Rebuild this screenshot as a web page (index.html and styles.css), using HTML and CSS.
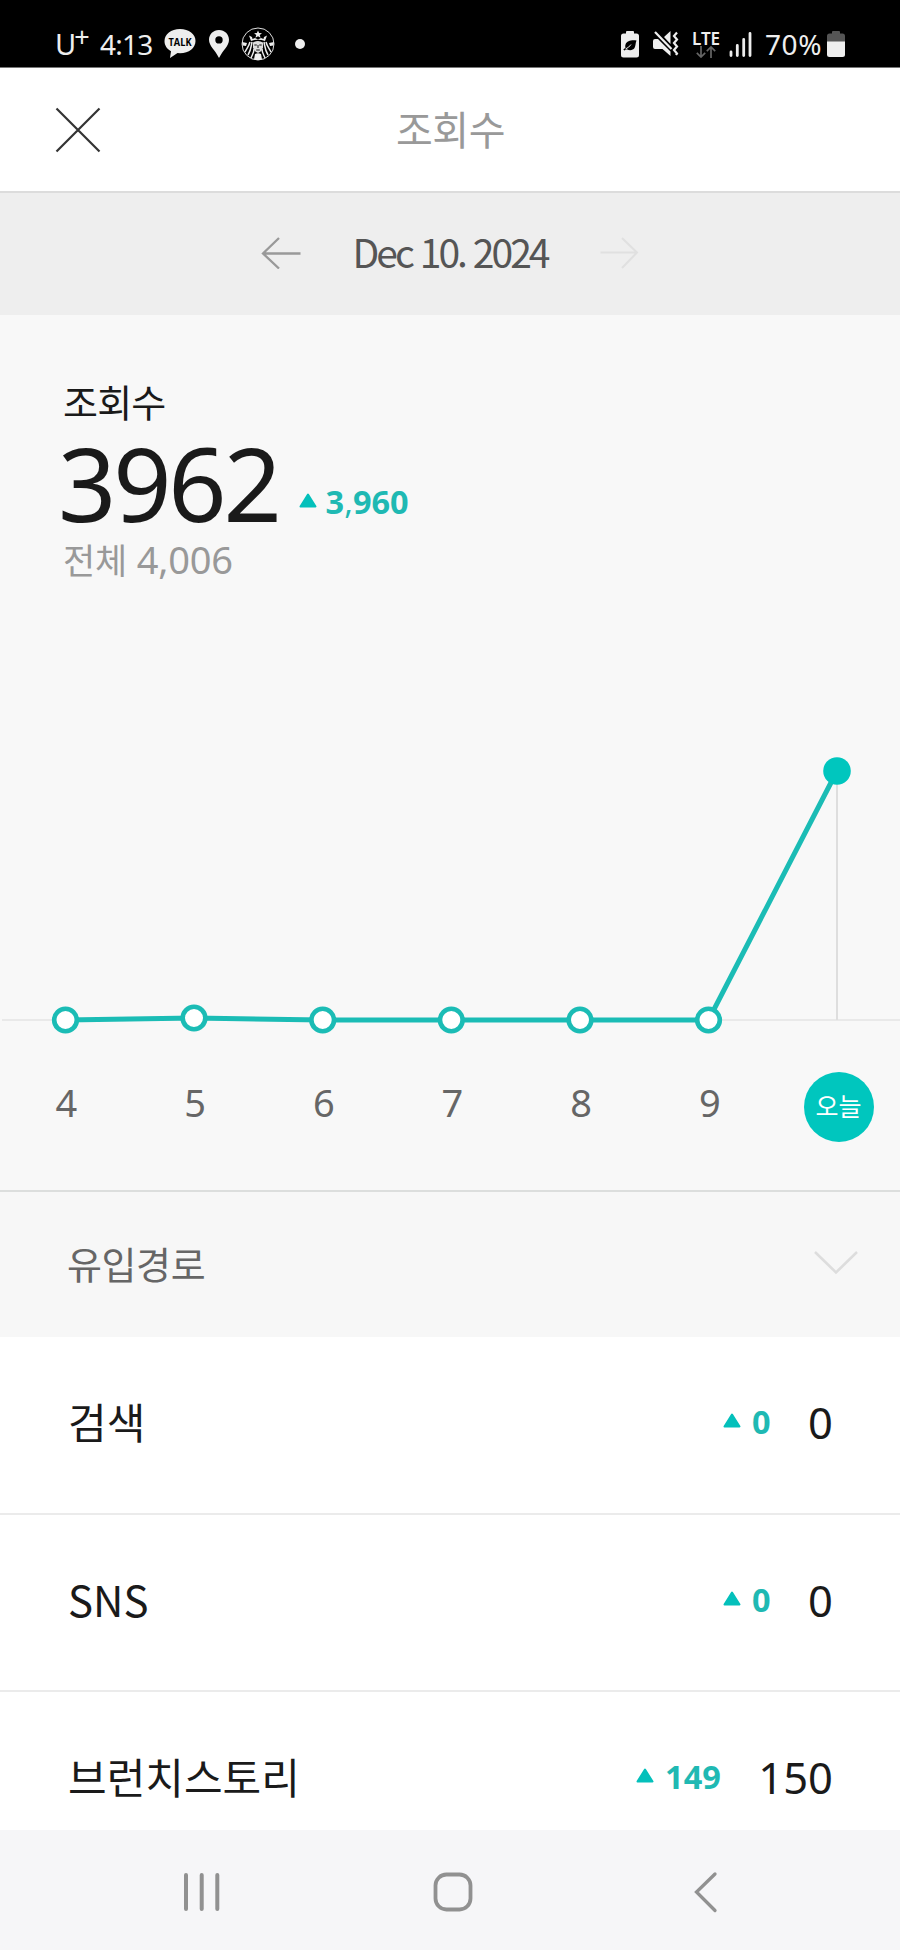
FILE: index.html
```html
<!DOCTYPE html>
<html lang="ko">
<head>
  <meta charset="UTF-8">
  <meta name="viewport" content="width=device-width, initial-scale=1.0">
  <title>조회수</title>
  <link rel="stylesheet" href="styles.css">
</head>
<body>
  <div class="app">
    <div class="status-bar">
      <div class="status-left">
        <span class="carrier">U<sup>+</sup></span>
        <span class="clock">4:13</span>
        <svg class="icon-talk" width="32" height="30" viewBox="0 0 32 30">
          <path d="M16 0C7 0 .5 5.200.5 12c0 4.500 2.500 8 6.500 10.200L6 29l7.500-5 2.500.2c9 0 15.500-5.200 15.500-12.200S25 0 16 0z" fill="#eee"/>
          <text x="16" y="16.500" text-anchor="middle" textLength="23" lengthAdjust="spacingAndGlyphs">TALK</text>
        </svg>
        <svg class="icon-pin" width="20" height="28" viewBox="0 0 20 28">
          <path d="M10 0C4.300 0 0 4.300 0 9.800 0 16 6 20 10 28c4-8 10-12 10-18.200C20 4.300 15.700 0 10 0zm0 6.200a3.700 3.700 0 1 1 0 7.400 3.700 3.700 0 0 1 0-7.400z" fill="#eee" fill-rule="evenodd"/>
        </svg>
        <svg class="icon-siren" width="34" height="34" viewBox="0 0 34 34">
          <circle cx="17" cy="17" r="16" fill="#000" stroke="#ddd" stroke-width="1"/>
          <path d="M17 3.500l1.100 2.600 2.900.1-2.300 1.800.9 2.800-2.600-1.600-2.600 1.600.9-2.800L13 6.200l2.900-.1z" fill="#eee"/>
          <path d="M8 8.500l3 1.500.5 2 2.500-1 3 1.500 3-1.500 2.500 1 .5-2 3-1.500-2 5.500q-7-2.600-14 0z" fill="#eee"/>
          <path d="M1 15l5 1-1 3-3.500-.5zM33 15l-5 1 1 3 3.500-.5z" fill="#eee"/>
          <path d="M11 15c-1 5-1 8-4 13M9 15c-1 4-3 6-5 10M13 22c0 4-2 6-3 9M23 15c1 5 1 8 4 13M25 15c1 4 3 6 5 10M21 22c0 4 2 6 3 9" fill="none" stroke="#eee" stroke-width="1.500"/>
          <path d="M12 15.500q5-3 10 0v5q-1 4-5 5.500-4-1.500-5-5.500z" fill="#ddd"/>
          <path d="M13.300 18h2.500M18.200 18h2.500M17 18v3M15.200 23h3.600" stroke="#111" stroke-width="1" fill="none"/>
          <path d="M14 27q3-1.500 6 0l1 5.500q-4 1-8 0z" fill="#eee"/>
        </svg>
        <span class="more-dot"></span>
      </div>
      <div class="status-right">
        <svg class="icon-saver" width="18" height="27" viewBox="0 0 18 27">
          <path d="M6 0h6q1 0 1 1v1.500h2.500q2.500 0 2.500 2.500v19q0 2.500-2.500 2.500h-13Q0 26.500 0 24V5q0-2.500 2.500-2.500H5V1q0-1 1-1z" fill="#eee"/>
          <path d="M15.500 9.500c-5-.5-9.500 0-11 4-.6 1.700 0 3.300 0 3.300L2.300 18.600l1 .9 2.500-1.200c3 1.500 6.200 1 7.700-1.300 1.300-2 .8-5 2-7.500z" fill="#000"/>
          <path d="M4.500 18q3.500-1.500 5.500-4.500" stroke="#eee" fill="none"/>
        </svg>
        <svg class="icon-mute" width="26" height="26" viewBox="0 0 26 26">
          <path d="M2 1l16.500 17" stroke="#eee" stroke-width="2.200"/>
          <path d="M17.500 0v13L11 6zM0 10q0-2 2-2h3l12.500 12.500V25L9.500 18H2q-2 0-2-2z" fill="#eee"/>
          <path d="M24 1.500l-3 3.500 3 3.500-3 3.500 3 3.500-3 3.500 3 3.500-1 1.500" fill="none" stroke="#eee" stroke-width="2.200"/>
        </svg>
        <div class="lte">
          <span>LTE</span>
          <svg width="20" height="12" viewBox="0 0 20 12">
            <path d="M5 0v11M.8 6.800L5 11l4.200-4.200M15 12V1M10.800 5.200L15 1l4.200 4.200" fill="none" stroke="#666" stroke-width="1.700"/>
          </svg>
        </div>
        <svg class="icon-signal" width="24" height="25" viewBox="0 0 24 25">
          <path d="M2 20v3.500M8.300 13.500v10M14.700 7.500v16M21 1.500v22" stroke="#eee" stroke-width="2.800" stroke-linecap="round"/>
        </svg>
        <span class="battery-text">70%</span>
        <svg class="icon-battery" width="18" height="26" viewBox="0 0 18 26">
          <path d="M6 0h6q1 0 1 1v1.500h2.500Q18 2.500 18 5v6H0V5q0-2.500 2.500-2.500H5V1q0-1 1-1z" fill="#555"/>
          <path d="M0 10.500h18v13q0 2.500-2.500 2.500h-13Q0 26 0 23.500z" fill="#eee"/>
        </svg>
      </div>
    </div>

    <header class="header">
      <svg class="icon-close" width="46" height="46" viewBox="0 0 46 46">
        <path d="M1.500 1.500l43 43M44.500 1.500l-43 43" stroke="#333" stroke-width="2.200"/>
      </svg>
      <h1>조회수</h1>
    </header>

    <div class="date-bar">
      <svg width="40" height="32" viewBox="0 0 40 32">
        <path d="M39.500 16.500H1.500M18 1L2 16.500 18 31.500" fill="none" stroke="#999" stroke-width="2.300"/>
      </svg>
      <span class="date">Dec 10. 2024</span>
      <svg width="40" height="32" viewBox="0 0 40 32">
        <path d="M1.500 15.500h36M23 1l15 14.500L23 31" fill="none" stroke="#e0e0e0" stroke-width="2"/>
      </svg>
    </div>

    <section class="stats">
      <div class="summary">
        <h2>조회수</h2>
        <div class="count">
          <span class="count-num">3962</span>
          <span class="diff">
            <svg width="18" height="15" viewBox="0 0 18 15"><path d="M9 1.500L16.500 13.500H1.500z" fill="#04c0bb" stroke="#04c0bb" stroke-width="2" stroke-linejoin="round"/></svg>
            <b>3<i>,</i>960</b>
          </span>
        </div>
        <p class="total"><span>전체</span> 4,006</p>
      </div>

      <svg class="chart" width="900" height="300" viewBox="0 740 900 300">
        <path d="M2 1020H900" stroke="#e9e9e9" stroke-width="2"/>
        <path d="M837 771V1020" stroke="#dedede" stroke-width="2"/>
        <path d="M65.500 1020L194 1018 322.700 1020H708.500L837 771" fill="none" stroke="#1bbcb5" stroke-width="5"/>
        <g fill="#fff" stroke="#1bbcb5" stroke-width="4.600">
          <circle cx="65.500" cy="1020" r="11.300"/>
          <circle cx="194" cy="1018" r="11.300"/>
          <circle cx="322.700" cy="1020" r="11.300"/>
          <circle cx="451.300" cy="1020" r="11.300"/>
          <circle cx="580" cy="1020" r="11.300"/>
          <circle cx="708.500" cy="1020" r="11.300"/>
        </g>
        <circle cx="837" cy="771" r="13.800" fill="#00c6be"/>
      </svg>
      <div class="days">
        <span>4</span>
        <span>5</span>
        <span>6</span>
        <span>7</span>
        <span>8</span>
        <span>9</span>
        <span class="today">오늘</span>
      </div>
    </section>

    <section class="referrer">
      <div class="referrer-head">
        <h3>유입경로</h3>
        <svg width="44" height="24" viewBox="0 0 44 24">
          <path d="M1 1l21 20.500L43 1" fill="none" stroke="#ddd" stroke-width="2.500"/>
        </svg>
      </div>
      <ul>
        <li>
          <span class="name">검색</span>
          <span class="diff">
            <svg width="18" height="15" viewBox="0 0 18 15"><path d="M9 1.500L16.500 13.500H1.500z" fill="#04c0bb" stroke="#04c0bb" stroke-width="2" stroke-linejoin="round"/></svg>
            <b>0</b>
          </span>
          <span class="value">0</span>
        </li>
        <li>
          <span class="name">SNS</span>
          <span class="diff">
            <svg width="18" height="15" viewBox="0 0 18 15"><path d="M9 1.500L16.500 13.500H1.500z" fill="#04c0bb" stroke="#04c0bb" stroke-width="2" stroke-linejoin="round"/></svg>
            <b>0</b>
          </span>
          <span class="value">0</span>
        </li>
        <li>
          <span class="name">브런치스토리</span>
          <span class="diff">
            <svg width="18" height="15" viewBox="0 0 18 15"><path d="M9 1.500L16.500 13.500H1.500z" fill="#04c0bb" stroke="#04c0bb" stroke-width="2" stroke-linejoin="round"/></svg>
            <b>149</b>
          </span>
          <span class="value">150</span>
        </li>
      </ul>
    </section>

    <nav class="nav-bar">
      <svg width="40" height="42" viewBox="0 0 40 42">
        <path d="M4 4v34M19.700 4v34M35.300 4v34" stroke="#919191" stroke-width="4" stroke-linecap="round"/>
      </svg>
      <svg class="icon-home" width="42" height="42" viewBox="0 0 42 42">
        <rect x="3.500" y="3.500" width="35" height="35" rx="11" fill="none" stroke="#919191" stroke-width="3.800"/>
      </svg>
      <svg width="26" height="42" viewBox="0 0 26 42">
        <path d="M23 3L4.500 21 23 39.500" fill="none" stroke="#919191" stroke-width="3.300" stroke-linecap="round"/>
      </svg>
    </nav>
  </div>
</body>
</html>
```
FILE: styles.css
```css
* {
  box-sizing: border-box;
  margin: 0;
  padding: 0;
}

body {
  font-family: "Noto Sans", "Noto Sans CJK KR", sans-serif;
  background-color: #fff;
  color: #1a1a1a;
}

svg {
  display: block;
  flex-shrink: 0;
}

.app {
  width: 900px;
  height: 1950px;
  display: flex;
  flex-direction: column;
  overflow: hidden;
}

/* status bar */
.status-bar {
  flex: none;
  height: 68px;
  padding: 20px 55px 0 57px;
  display: flex;
  justify-content: space-between;
  background-color: #000;
  border-bottom: 1px solid #777;
  color: #eee;
}

.status-left,
.status-right {
  display: flex;
  align-items: center;
  height: 48px;
}

.carrier {
  width: 43px;
  margin-left: -2px;
  margin-right: 2px;
  font-size: 29px;
  line-height: 48px;
  white-space: nowrap;
}

.carrier sup {
  font-size: 27px;
  line-height: 0;
  vertical-align: 8px;
  margin-left: -2px;
}

.clock {
  width: 64px;
  font-size: 28px;
  letter-spacing: -0.8px;
  line-height: 48px;
}

.icon-talk text {
  font-family: "Open Sans", sans-serif;
  font-size: 11px;
  font-weight: 700;
  fill: #000;
}

.icon-pin {
  margin-left: 13px;
}

.icon-siren {
  margin-left: 12px;
}

.more-dot {
  width: 10px;
  height: 10px;
  margin-left: 20px;
  border-radius: 50%;
  background-color: #eee;
}

.icon-mute {
  margin-left: 14px;
}

.lte {
  width: 28px;
  margin-left: 13px;
  display: flex;
  flex-direction: column;
  align-items: center;
  font-size: 17px;
  font-weight: 600;
  line-height: 15px;
}

.icon-signal {
  margin-left: 9px;
}

.battery-text {
  width: 57px;
  margin: 0 5px 0 12px;
  font-size: 28px;
  letter-spacing: 0.6px;
  line-height: 48px;
}

/* title bar */
.header {
  flex: none;
  height: 123px;
  padding: 0 55px;
  display: grid;
  grid-template-columns: 46px 1fr 46px;
  align-items: center;
  text-align: center;
}

.header h1 {
  padding: 0 0 4px 1px;
  font-family: "Noto Sans CJK KR", sans-serif;
  font-size: 40px;
  font-weight: 400;
  letter-spacing: -0.4px;
  line-height: 60px;
  color: #999;
}

.date-bar {
  flex: none;
  height: 124px;
  padding-bottom: 2px;
  display: flex;
  justify-content: center;
  align-items: center;
  gap: 52px;
  background-color: #eee;
  border-top: 2px solid #dcdcdc;
}

.date {
  padding-bottom: 4px;
  font-family: "Noto Sans CJK KR", sans-serif;
  font-size: 39px;
  letter-spacing: -3px;
  line-height: 60px;
  color: #555;
}

/* view count */
.stats {
  flex: none;
  height: 875px;
  background-color: #f8f8f8;
}

.summary {
  height: 425px;
  padding: 58px 60px 0 63px;
}

.summary h2 {
  font-family: "Noto Sans CJK KR", sans-serif;
  font-size: 38px;
  font-weight: 400;
  letter-spacing: -0.8px;
  line-height: 56px;
}

.count {
  display: flex;
  align-items: baseline;
  height: 105px;
  line-height: 107px;
}

.count-num {
  font-size: 102px;
  letter-spacing: -3.2px;
  margin-left: -5px;
}

.diff {
  display: flex;
  align-items: baseline;
  gap: 11px;
  font-size: 32.5px;
  color: #1fb9b3;
}

.diff svg {
  transform: translateY(-6px);
}

.diff i {
  font-style: normal;
  font-weight: 400;
}

.count .diff {
  gap: 9px;
  margin-left: 20px;
  transform: translateY(-8px);
}

.total {
  font-size: 38px;
  line-height: 50px;
  letter-spacing: -0.2px;
  color: #999;
}

.total span {
  font-size: 35px;
}

.days {
  display: grid;
  grid-template-columns: repeat(7, 1fr);
  align-items: center;
  justify-items: center;
  height: 134px;
  margin-right: -3px;
  padding-left: 2px;
  font-size: 38px;
  color: #666;
}

.days span {
  padding-bottom: 11px;
}

.days .today {
  width: 70px;
  height: 70px;
  padding: 0;
  border-radius: 50%;
  background-color: #00c6be;
  color: #fff;
  font-size: 25px;
  line-height: 68px;
  text-align: center;
}

/* referrers */
.referrer {
  flex: 1;
  min-height: 0;
  overflow: hidden;
}

.referrer-head {
  height: 147px;
  padding: 0 42px 4px 67px;
  display: flex;
  justify-content: space-between;
  align-items: center;
  background-color: #f7f7f7;
  border-top: 2px solid #dcdedd;
}

.referrer-head h3 {
  font-size: 38px;
  font-weight: 400;
  letter-spacing: -0.4px;
  color: #666;
}

.referrer ul {
  list-style: none;
}

.referrer li {
  height: 177.7px;
  padding: 0 67px 0 68px;
  display: flex;
  align-items: baseline;
  border-bottom: 2px solid #ebebeb;
  line-height: 168px;
}

.referrer .diff {
  transform: translateY(-5px);
}

.name {
  flex: 1;
  font-family: "Noto Sans CJK KR", sans-serif;
  font-size: 42px;
}

.value {
  margin-left: 37.5px;
  font-size: 43.5px;
}

/* android nav */
.nav-bar {
  flex: none;
  height: 120px;
  padding: 3px 182px 0;
  display: flex;
  justify-content: space-between;
  align-items: center;
  background-color: #f6f6f8;
}

.icon-home {
  margin-right: 8px;
}
```
